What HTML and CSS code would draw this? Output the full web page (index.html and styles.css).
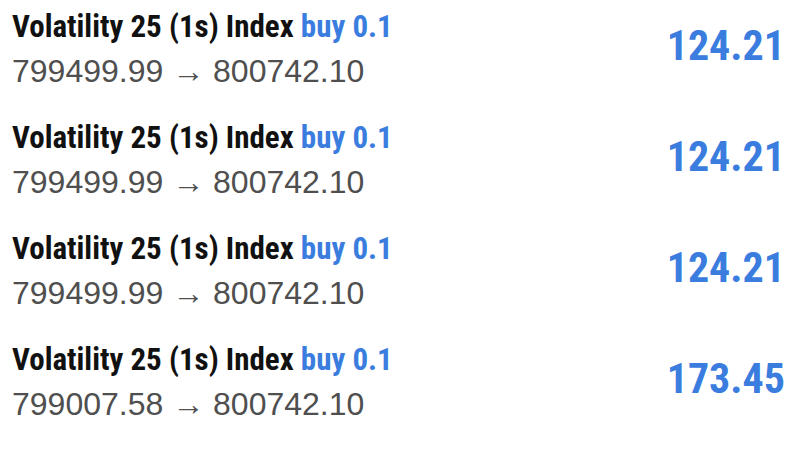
FILE: index.html
```html
<!DOCTYPE html>
<html>
<head>
<meta charset="utf-8">
<link rel="stylesheet" href="styles.css">
</head>
<body>
<ul class="trades">
  <li class="trade">
    <div class="info">
      <div class="title">Volatility 25 (1s) Index <span class="side">buy 0.1</span></div>
      <div class="range">799499.99 → 800742.10</div>
    </div>
    <div class="profit">124.21</div>
  </li>
  <li class="trade">
    <div class="info">
      <div class="title">Volatility 25 (1s) Index <span class="side">buy 0.1</span></div>
      <div class="range">799499.99 → 800742.10</div>
    </div>
    <div class="profit">124.21</div>
  </li>
  <li class="trade">
    <div class="info">
      <div class="title">Volatility 25 (1s) Index <span class="side">buy 0.1</span></div>
      <div class="range">799499.99 → 800742.10</div>
    </div>
    <div class="profit">124.21</div>
  </li>
  <li class="trade">
    <div class="info">
      <div class="title">Volatility 25 (1s) Index <span class="side">buy 0.1</span></div>
      <div class="range">799007.58 → 800742.10</div>
    </div>
    <div class="profit">173.45</div>
  </li>
</ul>
</body>
</html>
```
FILE: styles.css
```css
html, body {
  margin: 0;
  padding: 0;
  background: #ffffff;
}
.trades {
  list-style: none;
  margin: 0;
  padding: 0;
}
.trade {
  display: flex;
  justify-content: space-between;
  align-items: flex-start;
  height: 111px;
  box-sizing: border-box;
  padding: 10px 15px 0 12px;
}
.title {
  font-family: "Roboto Condensed", "Roboto", sans-serif;
  font-weight: 700;
  font-size: 31px;
  line-height: 34px;
  color: #111111;
  white-space: nowrap;
}
.side {
  color: #3b7ddf;
}
.range {
  margin-top: 10px;
  font-family: "Liberation Sans", Arial, sans-serif;
  font-size: 32px;
  line-height: 34px;
  color: #4f4f4f;
  white-space: nowrap;
}
.profit {
  margin-top: 15px;
  font-family: "Roboto Condensed", "Roboto", sans-serif;
  font-weight: 700;
  font-size: 42px;
  line-height: 42px;
  color: #3b7ddf;
}
```
